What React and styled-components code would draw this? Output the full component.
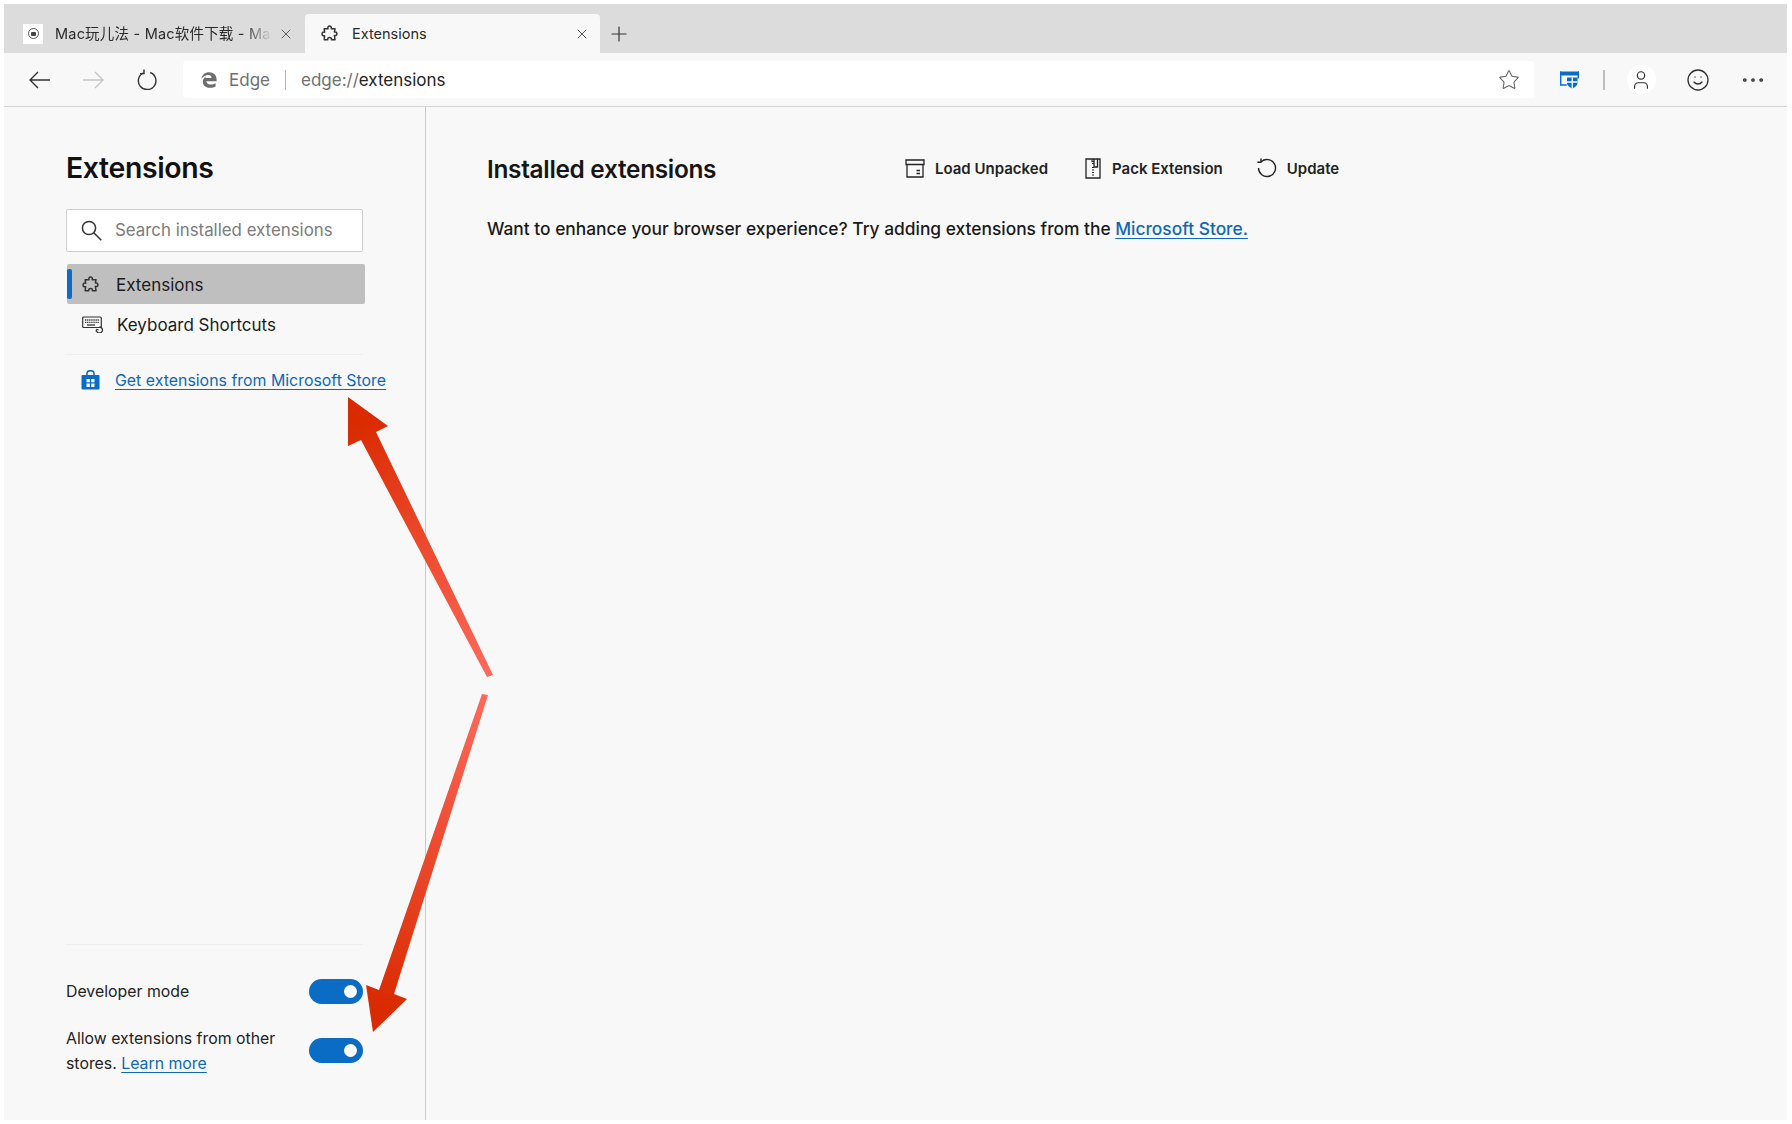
import React from 'react'
import styled, { createGlobalStyle } from 'styled-components'
import { Star, User, Smile, Plus, X, MoreHorizontal } from 'lucide-react'

const Global = createGlobalStyle`
  html, body { margin: 0; padding: 0; background: #fff; }
  body { font-family: Inter, "Noto Sans CJK SC", "Liberation Sans", sans-serif; color: #1b1b1b; }
`

const Page = styled.div`
  position: relative;
  width: 1792px;
  height: 1124px;
  padding: 4px 5px 4px 4px;
  box-sizing: border-box;
  overflow: hidden;
`
const Browser = styled.div`
  height: 100%;
  display: flex;
  flex-direction: column;
  background: #f8f8f8;
`
const TabStrip = styled.div`
  height: 49px;
  flex: none;
  display: flex;
  align-items: flex-end;
  background: #dcdcdc;
  padding-left: 19px;
  box-sizing: border-box;
`
const Tab = styled.div`
  height: 39px;
  display: flex;
  align-items: center;
  box-sizing: border-box;
  width: ${p => p.$width}px;
  padding-right: ${p => (p.$active ? 10 : 11)}px;
  padding-left: ${p => (p.$active ? 16 : 0)}px;
  border-radius: 4px 4px 0 0;
  background: ${p => (p.$active ? '#f8f8f8' : 'transparent')};
`
const Favicon = styled.div`
  width: 20px;
  height: 20px;
  flex: none;
  background: #fff;
  display: flex;
  align-items: center;
  justify-content: center;
`
const FaviconDot = styled.div`
  width: 11px;
  height: 11px;
  border: 1.5px solid #555;
  border-radius: 50%;
  box-sizing: border-box;
  display: flex;
  align-items: center;
  justify-content: center;
  &::after {
    content: '';
    width: 5px;
    height: 4px;
    background: #444;
    border-radius: 1px;
  }
`
const TabTitle = styled.div`
  flex: 1;
  min-width: 0;
  font-size: 14.5px;
  line-height: 20px;
  white-space: nowrap;
  overflow: hidden;
  margin-left: ${p => p.$indent}px;
  color: #2a2a2a;
  ${p => p.$fade && `
    letter-spacing: 0.2px;
    -webkit-mask-image: linear-gradient(to right, #000 86%, transparent 99%);
    mask-image: linear-gradient(to right, #000 86%, transparent 99%);
  `}
`
const NewTab = styled.div`
  width: 38px;
  height: 39px;
  display: flex;
  align-items: center;
  justify-content: center;
  color: #333;
`
const Toolbar = styled.div`
  height: 54px;
  flex: none;
  display: flex;
  align-items: center;
  box-sizing: border-box;
  background: #f8f8f8;
  border-bottom: 1.5px solid #d3d3d3;
  padding-left: 25px;
`
const NavButton = styled.div`
  width: ${p => p.$w}px;
  display: flex;
  align-items: center;
  flex: none;
`
const Omnibox = styled.div`
  width: 1351px;
  height: 37px;
  margin-left: 26px;
  background: #fff;
  border-radius: 4px;
  display: flex;
  align-items: center;
  box-sizing: border-box;
  padding: 0 14px 0 18px;
  flex: none;
`
const EdgeLabel = styled.span`
  font-size: 17px;
  color: #707070;
  margin-left: 12px;
`
const OmniDivider = styled.div`
  width: 1px;
  height: 20px;
  background: #b5b5b5;
  margin: 0 15px;
`
const Url = styled.span`
  font-size: 17px;
  color: #707070;
  flex: 1;
  b { color: #222; font-weight: 400; }
`
const ToolIcons = styled.div`
  display: flex;
  align-items: center;
  flex: none;
  margin-left: 26px;
  color: #2f2f2f;
`
const ToolDivider = styled.div`
  width: 1.5px;
  height: 20px;
  background: #bdbdbd;
  margin: 0 22px 0 24px;
`
const ProfileBubble = styled.div`
  width: 29px;
  height: 29px;
  border-radius: 50%;
  background: #fff;
  display: flex;
  align-items: center;
  justify-content: center;
  margin-right: 30px;
`
const Content = styled.div`
  flex: 1;
  display: flex;
  min-height: 0;
`
const Sidebar = styled.aside`
  width: 421.5px;
  flex: none;
  box-sizing: border-box;
  border-right: 1.5px solid #c9c9c9;
  padding: 0 0 0 62px;
  display: flex;
  flex-direction: column;
`
const SideTitle = styled.h1`
  margin: 43.5px 0 0;
  font-size: 28.4px;
  line-height: 34px;
  font-weight: 600;
  letter-spacing: -0.35px;
  color: #111;
`
const SearchBox = styled.div`
  width: 297px;
  height: 43px;
  margin-top: 24.5px;
  box-sizing: border-box;
  background: #fff;
  border: 1.5px solid #cfcfcf;
  border-radius: 2px;
  display: flex;
  align-items: center;
  padding-left: 14px;
  color: #333;
`
const SearchText = styled.span`
  font-size: 16.85px;
  color: #7b7b7b;
  margin-left: 13px;
  padding-bottom: 2px;
`
const NavRow = styled.div`
  position: relative;
  width: 298px;
  height: 40px;
  margin-left: 1px;
  margin-top: ${p => p.$top || 0}px;
  border-radius: 2px;
  background: ${p => (p.$active ? '#bfbfbf' : 'transparent')};
  display: flex;
  align-items: center;
  padding-left: ${p => p.$inset}px;
  box-sizing: border-box;
  font-size: 17px;
  color: #1c1c1c;
`
const ActiveBar = styled.div`
  position: absolute;
  left: 0;
  top: 5px;
  bottom: 5px;
  width: 5px;
  border-radius: 2px;
  background: #0a6cc4;
`
const NavLabel = styled.span`
  margin-left: ${p => p.$indent}px;
  padding-top: 1px;
`
const SideDivider = styled.div`
  width: 297px;
  height: 1px;
  background: #efefef;
  margin-top: ${p => p.$top || 0}px;
  flex: none;
`
const StoreRow = styled.div`
  display: flex;
  align-items: center;
  margin: 15px 0 0 15px;
  font-size: 15.9px;
`
const Link = styled.a`
  color: #0f68b5;
  text-decoration: underline;
  text-underline-offset: 3px;
  text-decoration-thickness: 1px;
`
const StoreLink = styled(Link)`
  margin-left: 15px;
  white-space: nowrap;
`
const SideBottom = styled.div`
  margin-top: auto;
  width: 297px;
  padding-bottom: 44px;
`
const ToggleRow = styled.div`
  display: flex;
  align-items: center;
  justify-content: space-between;
  margin-top: ${p => p.$top}px;
  font-size: 15.85px;
  line-height: 24.5px;
  color: #222;
`
const ToggleLabel = styled.span`
  padding-top: 2px;
`
const Toggle = styled.div`
  width: 54px;
  height: 25px;
  border-radius: 13px;
  background: #0a6cc4;
  display: flex;
  align-items: center;
  justify-content: flex-end;
  padding-right: 6px;
  box-sizing: border-box;
  flex: none;
`
const Knob = styled.div`
  width: 13px;
  height: 13px;
  border-radius: 50%;
  background: #fff;
`
const Main = styled.main`
  flex: 1;
  padding: 44px 0 0 61.5px;
  box-sizing: border-box;
`
const MainHeader = styled.div`
  display: flex;
  align-items: center;
  height: 36px;
`
const MainTitle = styled.h2`
  margin: 0;
  width: 418px;
  font-size: 24.4px;
  font-weight: 600;
  letter-spacing: -0.3px;
  color: #161616;
  flex: none;
`
const ActionButton = styled.div`
  display: flex;
  align-items: center;
  font-size: 15px;
  font-weight: 600;
  color: #222;
  margin-right: ${p => p.$space}px;
  padding-bottom: 2px;
  white-space: nowrap;
`
const ActionLabel = styled.span`
  margin-left: ${p => p.$indent}px;
`
const Promo = styled.p`
  margin: 30px 0 0;
  font-size: 17.37px;
  line-height: 24px;
  font-weight: 500;
  color: #1a1a1a;
  white-space: nowrap;
`
const ArrowLayer = styled.svg`
  position: absolute;
  left: 0;
  top: 0;
  pointer-events: none;
`

const NavArrow = ({ flip, color }) => (
  <svg width="21" height="18" viewBox="0 0 21 18" fill="none" stroke={color} strokeWidth="1.4" style={{ flex: 'none', transform: flip ? 'scaleX(-1)' : 'none' }}>
    <path d="M1 9H21M9 1L1 9l8 8" />
  </svg>
)

const SearchIcon = () => (
  <svg width="21" height="21" viewBox="0 0 21 21" fill="none" stroke="#333" strokeWidth="1.5" style={{ flex: 'none' }}>
    <circle cx="8" cy="8" r="6.600" />
    <path d="M12.800 12.800L20.300 20.300" />
  </svg>
)

const PuzzleIcon = () => (
  <svg width="17" height="19" viewBox="0 0 17 19" fill="none" stroke="#333" strokeWidth="1.5" strokeLinejoin="round" style={{ flex: 'none' }}>
    <path d="M7 4.800C5.800 1 11.400 1 10.200 4.800L14 4.800L13.400 8C16.800 7.200 16.800 12.400 13.400 11.500L14 15.800L10.400 15.800C11.400 12.600 5.800 12.600 6.800 15.800L3.200 15.800L3.600 11.700C.2 12.600 .2 7.200 3.600 8.200L3.200 4.800Z" />
  </svg>
)

const RefreshIcon = () => (
  <svg width="20" height="21" viewBox="0 0 20 21" fill="none" stroke="#333" strokeWidth="1.4" style={{ flex: 'none' }}>
    <path d="M6.400 3.800A8.800 8.800 0 1 0 13.200 3.500" />
    <path d="M7 .6V4.600H3" />
  </svg>
)

const UpdateIcon = () => (
  <svg width="20" height="20" viewBox="0 0 20 20" fill="none" stroke="#222" strokeWidth="1.4" style={{ flex: 'none' }}>
    <path d="M4.200 3.800A8.500 8.500 0 1 1 1.500 10" />
    <path d="M4 .4V4.200H.4" />
  </svg>
)

const EdgeLogo = () => (
  <svg width="16" height="16" viewBox="0 0 16 16" style={{ flex: 'none' }}>
    <path fill="#6d6d6d" d="M.3 7C1 2.700 4.200.2 8 .2c4.600 0 7.600 3 7.600 7.300V9.300H5.300c.1 2 1.900 3.300 4.300 3.300 1.900 0 3.500-.5 5-1.400v3.300c-1.500.9-3.400 1.300-5.500 1.300C4.700 15.800 1.800 13.300 1.800 9.700c0-2.300 1.100-4 3.300-5.200-.4.500-.6 1-.7 1.600h6.100c0-1.800-1.100-3-3.200-3C4.800 3.100 2.200 4.500.3 7z" />
  </svg>
)

const ShieldWindow = () => (
  <svg width="19" height="18" viewBox="0 0 19 18" fill="none" style={{ flex: 'none' }}>
    <path d="M0 .5h19v4H0z" fill="#0a6cc4" />
    <path d="M.7 .5v13.500h6M18.300 .5v7" stroke="#0a6cc4" strokeWidth="1.400" />
    <path d="M7 6.500h10.500v5.500c0 2.500-2.700 4.500-5.250 5.500C9.700 16.500 7 14.500 7 12z" fill="#0a6cc4" />
    <path d="M12.250 6.500v11M7 11h10.500" stroke="#fff" strokeWidth="1.300" />
  </svg>
)

const KeyboardIcon = () => (
  <svg width="21" height="17" viewBox="0 0 21 17" fill="none" stroke="#333" style={{ flex: 'none' }}>
    <rect x=".7" y="1" width="18.600" height="10.500" rx="1" strokeWidth="1.200" />
    <path d="M3 4h14M3 6.300h14" strokeWidth="1.300" strokeDasharray="1.300 .8" />
    <path d="M5 9h8" strokeWidth="1.300" />
    <path d="M14.500 13.500a3 3 0 1 0 3-2.500" strokeWidth="1.300" />
    <path d="M14 15.500l.6-2.200 2.100.6" strokeWidth="1" />
  </svg>
)

const StoreIcon = () => (
  <svg width="19" height="20" viewBox="0 0 19 20" style={{ flex: 'none' }}>
    <path d="M6 5V3.500a3.500 2.800 0 0 1 7 0V5" fill="none" stroke="#0a6cc4" strokeWidth="1.500" />
    <rect x=".5" y="5" width="18" height="14.500" rx="1" fill="#0a6cc4" />
    <path d="M5.500 9h3.300v3.300H5.500zM10.200 9h3.300v3.300h-3.300zM5.500 13.600h3.300v3.300H5.500zM10.200 13.600h3.300v3.300h-3.300z" fill="#fff" />
  </svg>
)

const BoxIcon = () => (
  <svg width="20" height="19" viewBox="0 0 20 19" fill="none" stroke="#222" strokeWidth="1.300" style={{ flex: 'none' }}>
    <path d="M1 1h18v4.500H1zM2 5.500V18h16V5.500" />
    <path d="M11.500 11.500h3.500M11.500 14.500h3.500" />
  </svg>
)

const ZipIcon = () => (
  <svg width="18" height="21" viewBox="0 0 18 21" fill="none" stroke="#222" strokeWidth="1.300" style={{ flex: 'none' }}>
    <path d="M2 1h14v19H2z" />
    <path d="M10 1v8h3.500V1" />
    <path d="M8 1.500v2h2M8 5.500h2M8 9.500h2M8 12h2M8 14.500h2M8 17h2" strokeWidth="1.100" />
  </svg>
)

const Arrows = () => (
  <ArrowLayer width="1792" height="1124" viewBox="0 0 1792 1124">
    <defs>
      <linearGradient id="up" gradientUnits="userSpaceOnUse" x1="355" y1="420" x2="490" y2="676">
        <stop offset="0" stopColor="#d92a00" />
        <stop offset="1" stopColor="#ff6a5c" />
      </linearGradient>
      <linearGradient id="down" gradientUnits="userSpaceOnUse" x1="485" y1="694" x2="380" y2="1010">
        <stop offset="0" stopColor="#ff6a5c" />
        <stop offset="1" stopColor="#d92a00" />
      </linearGradient>
    </defs>
    <path fill="url(#up)" d="M348 397L388 426L376 432L493 675L487 677L361 440L348 446Z" />
    <path fill="url(#down)" d="M482 694L488 695L394 994L407 999L373 1032L366 985L379 990Z" />
  </ArrowLayer>
)

export default function App() {
  return (
    <Page>
      <Global />
      <Browser>
        <TabStrip>
          <Tab $width={282}>
            <Favicon><FaviconDot /></Favicon>
            <TabTitle $indent={12} $fade>Mac玩儿法 - Mac软件下载 - Mac玩儿法</TabTitle>
            <X size={16} color="#555" strokeWidth={1.4} style={{ marginLeft: 4, flex: 'none' }} />
          </Tab>
          <Tab $width={295} $active>
            <PuzzleIcon />
            <TabTitle $indent={14}>Extensions</TabTitle>
            <X size={16} color="#444" strokeWidth={1.4} />
          </Tab>
          <NewTab><Plus size={24} strokeWidth={1.2} /></NewTab>
        </TabStrip>
        <Toolbar>
          <NavButton $w={54}><NavArrow color="#333" /></NavButton>
          <NavButton $w={54}><NavArrow flip color="#c4c4c4" /></NavButton>
          <NavButton $w={20}><RefreshIcon /></NavButton>
          <Omnibox>
            <EdgeLogo />
            <EdgeLabel>Edge</EdgeLabel>
            <OmniDivider />
            <Url>edge://<b>extensions</b></Url>
            <Star size={22} color="#666" strokeWidth={1.2} />
          </Omnibox>
          <ToolIcons>
            <ShieldWindow />
            <ToolDivider />
            <ProfileBubble><User size={22} strokeWidth={1.3} /></ProfileBubble>
            <Smile size={24} strokeWidth={1.3} />
            <MoreHorizontal size={28} strokeWidth={1.2} style={{ marginLeft: 29 }} />
          </ToolIcons>
        </Toolbar>
        <Content>
          <Sidebar>
            <SideTitle>Extensions</SideTitle>
            <SearchBox>
              <SearchIcon />
              <SearchText>Search installed extensions</SearchText>
            </SearchBox>
            <NavRow $active $top={12} $inset={15}>
              <ActiveBar />
              <PuzzleIcon />
              <NavLabel $indent={17}>Extensions</NavLabel>
            </NavRow>
            <NavRow $inset={15}>
              <KeyboardIcon />
              <NavLabel $indent={14}>Keyboard Shortcuts</NavLabel>
            </NavRow>
            <SideDivider $top={10} />
            <StoreRow>
              <StoreIcon />
              <StoreLink>Get extensions from Microsoft Store</StoreLink>
            </StoreRow>
            <SideBottom>
              <SideDivider />
              <ToggleRow $top={33}>
                <ToggleLabel>Developer mode</ToggleLabel>
                <Toggle><Knob /></Toggle>
              </ToggleRow>
              <ToggleRow $top={20.5}>
                <ToggleLabel>Allow extensions from other<br />stores. <Link>Learn more</Link></ToggleLabel>
                <Toggle><Knob /></Toggle>
              </ToggleRow>
            </SideBottom>
          </Sidebar>
          <Main>
            <MainHeader>
              <MainTitle>Installed extensions</MainTitle>
              <ActionButton $space={36}><BoxIcon /><ActionLabel $indent={10}>Load Unpacked</ActionLabel></ActionButton>
              <ActionButton $space={34}><ZipIcon /><ActionLabel $indent={10}>Pack Extension</ActionLabel></ActionButton>
              <ActionButton $space={0}><UpdateIcon /><ActionLabel $indent={10}>Update</ActionLabel></ActionButton>
            </MainHeader>
            <Promo>Want to enhance your browser experience? Try adding extensions from the <Link>Microsoft Store.</Link></Promo>
          </Main>
        </Content>
      </Browser>
      <Arrows />
    </Page>
  )
}
